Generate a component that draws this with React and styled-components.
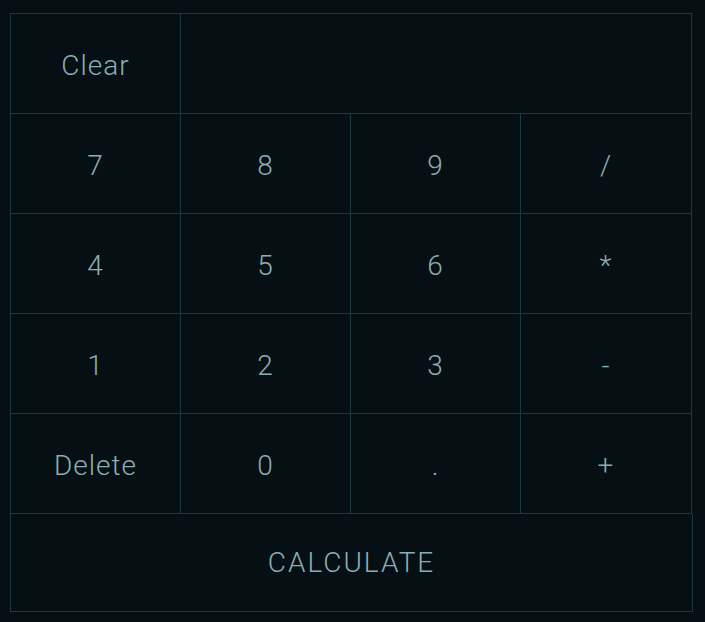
import React, {useState} from 'react';
import styled, {createGlobalStyle} from 'styled-components';

const GlobalStyle = createGlobalStyle`
  html, body {
    margin: 0;
    background-color: #060f13;
  }
`;

const Page = styled.div`
  padding: 13px 13px 11px 10px;
`;

const Keypad = styled.div`
  display: grid;
  grid-template-columns: 170px 170px 170px 171px;
  grid-auto-rows: 100px;
  width: 682px;
  border-top: 1px solid #1b3a40;
  border-left: 1px solid #1b3a40;
  box-sizing: border-box;
`;

const Key = styled.button`
  display: flex;
  align-items: center;
  justify-content: center;
  background: #060f13;
  color: #8cadb5;
  font-family: Roboto, "Liberation Sans", sans-serif;
  font-weight: 300;
  font-size: 28px;
  letter-spacing: 1px;
  border: none;
  border-right: 1px solid #1b3a40;
  border-bottom: 1px solid #1b3a40;
  padding: 4px 0 0;
  cursor: pointer;
`;

const Display = styled.div`
  grid-column: span 3;
  border-right: 1px solid #1b3a40;
  border-bottom: 1px solid #1b3a40;
  color: #8cadb5;
  font-family: Roboto, "Liberation Sans", sans-serif;
  font-size: 28px;
`;

const Calculate = styled.button`
  display: block;
  width: 683px;
  height: 98px;
  background: #060f13;
  color: #8cadb5;
  font-family: Roboto, "Liberation Sans", sans-serif;
  font-weight: 300;
  font-size: 28px;
  letter-spacing: 2px;
  border: 1px solid #1b3a40;
  border-top: none;
  padding: 0;
  cursor: pointer;
`;

const rows = [
  ['7', '8', '9', '/'],
  ['4', '5', '6', '*'],
  ['1', '2', '3', '-'],
  ['Delete', '0', '.', '+'],
];

const App = () => {
  const [value, setValue] = useState('');

  const press = (k) => {
    if (k === 'Delete') setValue(value.slice(0, -1));
    else setValue(value + k);
  };

  return (
    <Page>
      <GlobalStyle />
      <Keypad>
        <Key onClick={() => setValue('')}>Clear</Key>
        <Display>{value}</Display>
        {rows.flat().map((k) => (
          <Key key={k} onClick={() => press(k)}>{k}</Key>
        ))}
      </Keypad>
      <Calculate onClick={() => setValue('')}>CALCULATE</Calculate>
    </Page>
  );
};

export default App;
